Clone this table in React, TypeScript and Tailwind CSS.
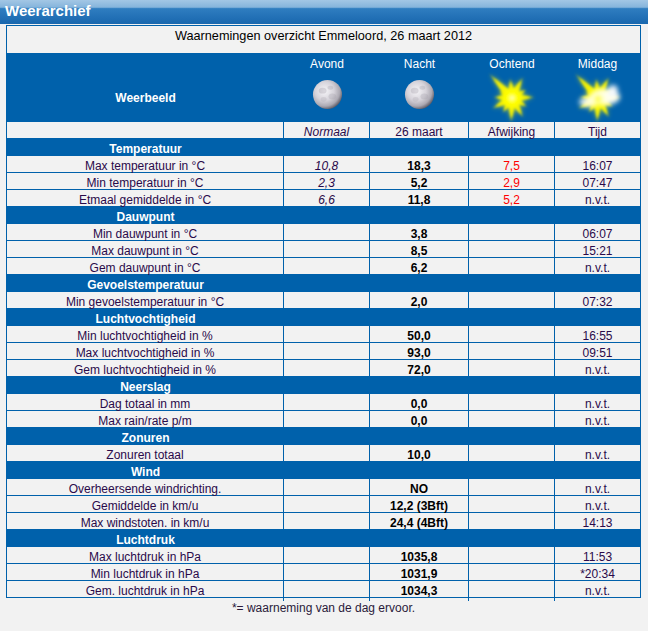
import React from 'react';

type Row = [string, string, string, string, string];

interface Section {
  title: string;
  rows: Row[];
}

const sections: Section[] = [
  {
    title: 'Temperatuur',
    rows: [
      ['Max temperatuur in °C', '10,8', '18,3', '7,5', '16:07'],
      ['Min temperatuur in °C', '2,3', '5,2', '2,9', '07:47'],
      ['Etmaal gemiddelde in °C', '6,6', '11,8', '5,2', 'n.v.t.'],
    ],
  },
  {
    title: 'Dauwpunt',
    rows: [
      ['Min dauwpunt in °C', '', '3,8', '', '06:07'],
      ['Max dauwpunt in °C', '', '8,5', '', '15:21'],
      ['Gem dauwpunt in °C', '', '6,2', '', 'n.v.t.'],
    ],
  },
  {
    title: 'Gevoelstemperatuur',
    rows: [['Min gevoelstemperatuur in °C', '', '2,0', '', '07:32']],
  },
  {
    title: 'Luchtvochtigheid',
    rows: [
      ['Min luchtvochtigheid in %', '', '50,0', '', '16:55'],
      ['Max luchtvochtigheid in %', '', '93,0', '', '09:51'],
      ['Gem luchtvochtigheid in %', '', '72,0', '', 'n.v.t.'],
    ],
  },
  {
    title: 'Neerslag',
    rows: [
      ['Dag totaal in mm', '', '0,0', '', 'n.v.t.'],
      ['Max rain/rate p/m', '', '0,0', '', 'n.v.t.'],
    ],
  },
  {
    title: 'Zonuren',
    rows: [['Zonuren totaal', '', '10,0', '', 'n.v.t.']],
  },
  {
    title: 'Wind',
    rows: [
      ['Overheersende windrichting.', '', 'NO', '', 'n.v.t.'],
      ['Gemiddelde in km/u', '', '12,2 (3Bft)', '', 'n.v.t.'],
      ['Max windstoten. in km/u', '', '24,4 (4Bft)', '', '14:13'],
    ],
  },
  {
    title: 'Luchtdruk',
    rows: [
      ['Max luchtdruk in hPa', '', '1035,8', '', '11:53'],
      ['Min luchtdruk in hPa', '', '1031,9', '', '*20:34'],
      ['Gem. luchtdruk in hPa', '', '1034,3', '', 'n.v.t.'],
    ],
  },
];

const cols = 'grid grid-cols-[277px_86px_99px_86px_85px]';

function Moon({ id }: { id: string }) {
  return (
    <svg width="31" height="31" viewBox="0 0 32 32" className="-mt-[6px]">
      <defs>
        <radialGradient id={id} cx="40%" cy="38%" r="65%">
          <stop offset="0" stopColor="#f6f5f8" />
          <stop offset="0.5" stopColor="#d6d3da" />
          <stop offset="0.8" stopColor="#aca9b2" />
          <stop offset="1" stopColor="#5e5b66" />
        </radialGradient>
      </defs>
      <circle cx="16" cy="16" r="15" fill={`url(#${id})`} />
      <ellipse cx="11" cy="12" rx="4" ry="3" fill="#a29fa9" opacity="0.35" />
      <ellipse cx="19" cy="9" rx="3" ry="2" fill="#a29fa9" opacity="0.3" />
      <ellipse cx="21" cy="18" rx="4" ry="3" fill="#a29fa9" opacity="0.3" />
      <ellipse cx="12" cy="21" rx="3" ry="2.5" fill="#a29fa9" opacity="0.25" />
    </svg>
  );
}

const rays: [number, number][] = [
  [-133, 34],
  [-95, 20],
  [-62, 24],
  [-30, 17],
  [-2, 23],
  [30, 18],
  [60, 23],
  [92, 25],
  [122, 18],
  [152, 23],
  [182, 19],
  [208, 15],
];

function Sun({ id, cloud }: { id: string; cloud?: boolean }) {
  const star = (
    <>
      {rays.map(([a, l], i) => (
        <polygon
          key={i}
          points={`0,-4.5 ${l},0 0,4.5`}
          fill={`url(#${id}-r)`}
          transform={`rotate(${a})`}
        />
      ))}
      <circle r="11" fill={`url(#${id}-g)`} />
    </>
  );
  return (
    <svg width="70" height="70" viewBox="-35 -35 70 70" className="mt-[2px]">
      <defs>
        <filter id={`${id}-b`} x="-50%" y="-50%" width="200%" height="200%">
          <feGaussianBlur stdDeviation="0.8" />
        </filter>
        <filter id={`${id}-w`} x="-50%" y="-50%" width="200%" height="200%">
          <feGaussianBlur stdDeviation="2.4" />
        </filter>
        <radialGradient id={`${id}-g`}>
          <stop offset="0" stopColor="#ffffb0" />
          <stop offset="0.5" stopColor="#ffff00" />
          <stop offset="1" stopColor="#ffff00" stopOpacity="0" />
        </radialGradient>
        <linearGradient id={`${id}-r`} x1="0" y1="0" x2="1" y2="0">
          <stop offset="0" stopColor="#ffff00" />
          <stop offset="0.7" stopColor="#f6f000" stopOpacity="0.9" />
          <stop offset="1" stopColor="#e0d800" stopOpacity="0.1" />
        </linearGradient>
      </defs>
      <g filter={`url(#${id}-w)`} opacity="0.8">
        {star}
      </g>
      <g filter={`url(#${id}-b)`}>{star}</g>
      {cloud && (
        <g filter={`url(#${id}-w)`}>
          <ellipse cx="7" cy="-1" rx="15" ry="8" fill="#ffffff" opacity="0.92" />
          <ellipse cx="-9" cy="4" rx="10" ry="5" fill="#ffffff" opacity="0.85" />
          <ellipse cx="15" cy="-8" rx="5" ry="5" fill="#ffffff" opacity="0.9" />
          <circle cx="0" cy="1" r="5" fill="#ffff40" opacity="0.9" />
        </g>
      )}
    </svg>
  );
}

function DataRow({ row }: { row: Row }) {
  return (
    <div className={`${cols} h-[17px] border-b border-[#0061ab] text-center leading-[20px]`}>
      <div className="border-r border-[#0061ab] text-[#2a0a4a]">{row[0]}</div>
      <div className="border-r border-[#0061ab] italic text-[#2a0a4a]">{row[1]}</div>
      <div className="border-r border-[#0061ab] font-bold text-black">{row[2]}</div>
      <div className="border-r border-[#0061ab] text-[#ff0000]">{row[3]}</div>
      <div className="text-[#2a0a4a]">{row[4]}</div>
    </div>
  );
}

export default function App() {
  return (
    <div className="w-[648px] h-[631px] overflow-hidden bg-[#f2f2f2] text-[12px] font-['Liberation_Sans',Arial,sans-serif]">
      {/* Title bar */}
      <div className="h-[24px] bg-[linear-gradient(to_bottom,#a3c7e5_0%,#86b5dc_30%,#2f7dc0_36%,#1967ae_100%)] pl-[5px] text-[15px] font-bold leading-[21px] text-white">
        Weerarchief
      </div>

      {/* Table */}
      <div className="ml-[6px] mt-px w-[635px] border-x border-t border-[#0061ab]">
        <div className="h-[27px] pt-[3px] text-center text-[12.7px] leading-[15px] text-black">
          Waarnemingen overzicht Emmeloord, 26 maart 2012
        </div>

        <div className="bg-[#0061ab] text-white">
          <div className={`${cols} h-[19px] text-center leading-[22px]`}>
            <div />
            <div>Avond</div>
            <div>Nacht</div>
            <div>Ochtend</div>
            <div>Middag</div>
          </div>
          <div className={`${cols} h-[50px] grid-rows-[50px]`}>
            <div className="flex items-center justify-center pt-[2px] font-bold">Weerbeeld</div>
            <div className="flex items-center justify-center">
              <Moon id="moon-a" />
            </div>
            <div className="flex items-center justify-center">
              <Moon id="moon-b" />
            </div>
            <div className="flex items-center justify-center">
              <Sun id="sun-a" />
            </div>
            <div className="flex items-center justify-center">
              <Sun id="sun-b" cloud />
            </div>
          </div>
        </div>

        <div className={`${cols} h-[17px] border-b border-[#0061ab] text-center leading-[20px] text-[#2a0a4a]`}>
          <div className="border-r border-[#0061ab]" />
          <div className="border-r border-[#0061ab] italic">Normaal</div>
          <div className="border-r border-[#0061ab]">26 maart</div>
          <div className="border-r border-[#0061ab]">Afwijking</div>
          <div>Tijd</div>
        </div>

        {sections.map((s) => (
          <div key={s.title}>
            <div className={`${cols} h-[17px] bg-[#0061ab] text-center font-bold leading-[20px] text-white`}>
              <div>{s.title}</div>
            </div>
            {s.rows.map((r) => (
              <DataRow key={r[0]} row={r} />
            ))}
          </div>
        ))}
      </div>

      <div className="mt-[2px] w-[647px] text-center leading-[16px] text-[#2a1a3a]">
        *= waarneming van de dag ervoor.
      </div>
    </div>
  );
}
